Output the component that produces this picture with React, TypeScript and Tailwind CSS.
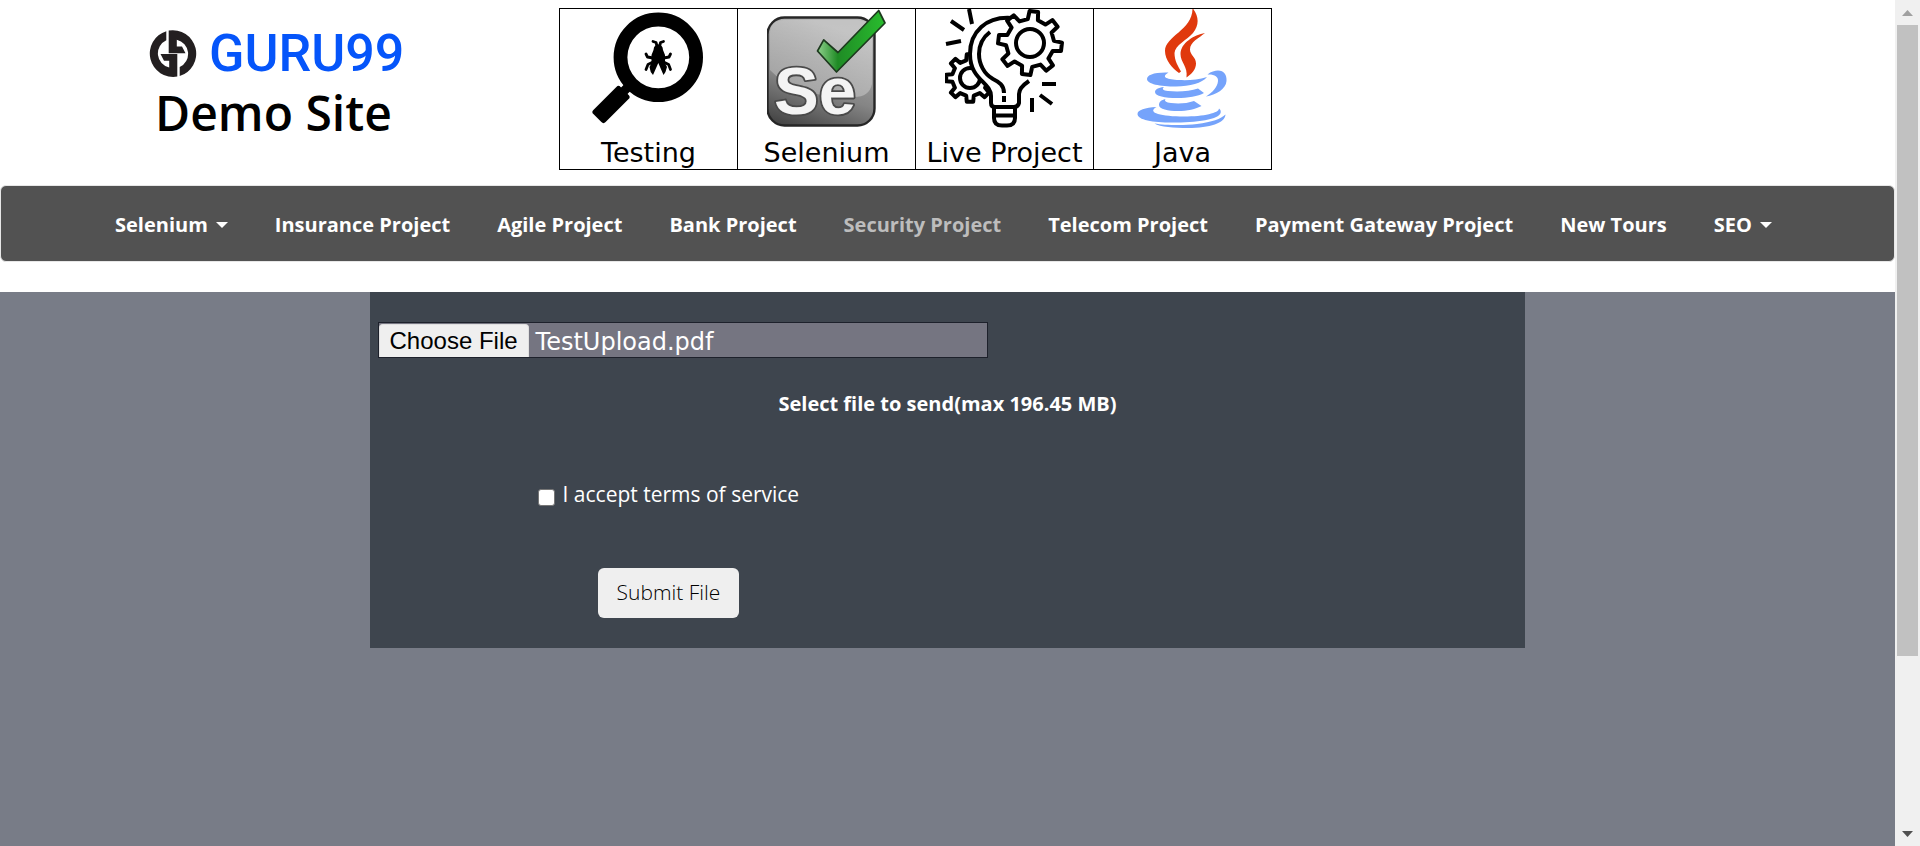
import { useState } from "react";

function gearPath(cx: number, cy: number, outer: number, root: number, teeth: number, turn: number) {
  const step = 360 / teeth;
  const points: string[] = [];
  for (let i = 0; i < teeth; i++) {
    const mid = i * step + turn;
    const corners: [number, number][] = [
      [root, mid - step * 0.27],
      [outer, mid - step * 0.17],
      [outer, mid + step * 0.17],
      [root, mid + step * 0.27],
    ];
    for (const [r, deg] of corners) {
      const a = ((deg - 90) * Math.PI) / 180;
      points.push(`${(cx + r * Math.cos(a)).toFixed(1)} ${(cy + r * Math.sin(a)).toFixed(1)}`);
    }
  }
  return `M${points.join("L")}Z`;
}

const bigGear = gearPath(86, 35, 32, 24, 8, 7);
const smallGear = gearPath(26, 70, 24, 18, 8, 0);

function LogoMark() {
  const half = "M17.3 1.2A23.4 23.4 0 0 0 28.3 46.6V24H11.5L15 30.7H20.2V37.5A14.5 14.5 0 0 1 17.3 10.2Z";
  return (
    <svg viewBox="0 0 48 48" className="size-12" fill="#231f20" aria-hidden="true">
      <path d={half} />
      <path d={half} transform="rotate(180 24 23.6)" />
    </svg>
  );
}

function TestingIcon() {
  return (
    <svg viewBox="1 1 120 120" className="size-[120px]" aria-hidden="true">
      <circle cx="70.3" cy="49.3" r="37.8" fill="none" stroke="#000" strokeWidth="13.8" />
      <path d="M45 74L34 85" stroke="#000" strokeWidth="9" />
      <path d="M30.5 81L38.5 89L15.5 112L7.5 104Z" stroke="#000" strokeWidth="6" strokeLinejoin="round" />
      <path d="M65.5 42Q66 36.5 70.3 36.5Q74.6 36.5 75 42L77 47V55L79 59Q78 64 75.5 67L70.3 55L65 67Q62 64 61.5 59L63.5 55V47Z" />
      <g fill="none" stroke="#000" strokeWidth="2.8" strokeLinecap="round" strokeLinejoin="round">
        <path d="M69 38L68 34.5L65 33.5M71.6 38L72.6 34.5L75.5 33.5" />
        <path d="M65 50L59.5 49L58 46M75.6 50L81 49L82.5 46" />
        <path d="M65 54L60 56.5L58 61.5M75.6 54L80.6 56.5L82.5 61.5" />
      </g>
    </svg>
  );
}

function SeleniumIcon() {
  return (
    <svg viewBox="1 1 120 120" className="size-[120px]" aria-hidden="true">
      <defs>
        <linearGradient id="seBox" x1="0" y1="1" x2="0.35" y2="0">
          <stop offset="0" stopColor="#3c3c3c" />
          <stop offset="0.45" stopColor="#858585" />
          <stop offset="1" stopColor="#b4b4b4" />
        </linearGradient>
        <linearGradient id="seShine" x1="0" y1="0" x2="0" y2="1">
          <stop offset="0" stopColor="#fff" stopOpacity="0.2" />
          <stop offset="1" stopColor="#fff" stopOpacity="0.3" />
        </linearGradient>
        <linearGradient id="seCheck" x1="0" y1="0" x2="1" y2="0">
          <stop offset="0" stopColor="#8fd08c" />
          <stop offset="0.3" stopColor="#1f8b25" />
          <stop offset="1" stopColor="#29bd2e" />
        </linearGradient>
      </defs>
      <rect x="1.5" y="9.5" width="107" height="108" rx="17" fill="url(#seBox)" stroke="#262626" strokeWidth="2.4" />
      <path d="M4 62V26Q4 12 18 12H92Q106 12 106 26V76Q103 90 86 89Q30 90 4 62Z" fill="url(#seShine)" />
      <text x="8" y="106" fontFamily="Liberation Sans, Arial, sans-serif" fontWeight="700" fontSize="67" fill="#f4f4f4" stroke="#4a4a4a" strokeWidth="3.6" strokeLinejoin="round" paintOrder="stroke">
        Se
      </text>
      <path d="M51.5 43L57.7 31.8L72 44.5L112.7 2.5L119 15L70.5 64Z" fill="url(#seCheck)" stroke="#1d3a1e" strokeWidth="1.7" strokeLinejoin="round" />
    </svg>
  );
}

function LiveProjectIcon() {
  return (
    <svg viewBox="1 1 120 120" className="size-[120px]" fill="none" stroke="#000" strokeWidth="4" strokeLinejoin="round" aria-hidden="true">
      <path d={smallGear} />
      <circle cx="26" cy="70" r="10" />
      <path d="M68 8C42 7 26 24 26 46C26 72 47 74 47 88V95Q47 99 51 99H70Q74 99 75 95V86C75 81 79 77 85 73L92 50Z" fill="#fff" stroke="none" />
      <path d="M68 10C42 8 26 24 26 46C26 72 47 74 47 88V95Q47 99 51 99H70Q74 99 75 95V86C75 81 79 77 85 73" />
      <path d="M46 24C38 30 35 37 35 46C35 56 40 66 49 71C55 74 60 77 60 85M60 88V94" />
      <path d="M50 99V110Q50 117.5 58 117.5H63Q71 117.5 71 110V99M50 107.5H71" />
      <path d={bigGear} fill="#fff" />
      <circle cx="86" cy="35" r="14" />
      <path d="M2 36L17 33M7 13L20 22M25 1L28 16M98 76H112M96 87L108 96M88 90V104" />
    </svg>
  );
}

function JavaIcon() {
  return (
    <svg viewBox="1 1 120 120" className="size-[120px]" aria-hidden="true">
      <g fill="#e0390d">
        <path d="M70.5 0C77 8 77.5 17 71 25C65 32 53 37 52.5 45C52.5 53 56 58 59 63.5L57 65C50 60 43 52 43 43C43 28 71 22 70.5 0Z" />
        <path d="M83 25C72 27 58.5 35 58.5 46C58.5 55 66 58 64.5 69.5C70 66 74 61 74 55.5C74 49 68 47 68 41.5C68 34 77 30 83 25Z" />
      </g>
      <g fill="#75a3fb">
        <path d="M46.5 64.5C32 64 25 67 25 71C25 76 38 78.5 54 78.5C68 78.5 80 75 85 69C76 72 65 72.5 57 72C46 71.5 38 69.5 46.5 64.5Z" />
        <path d="M42 79C36 79.5 33 81.5 33 84C33 88 43 90 55 90C66 90 76 88.5 82 85L76 80.5C68 83.500 55 84 46 83C41 82.500 39.500 81 42 79Z" />
        <path d="M43.5 91C39 92 37 94 37 97C37 101 46 103 56 103C65 103 74 101 79.5 98L72 93C65 95.5 56 96 49 95C44 94.5 42 93 43.5 91Z" />
        <path d="M85.5 66.5C89 63.5 93 62.5 96 62.5C102 62.5 105 67 104.5 73C104 81 94 87 84 88.5C91 84 95.5 79 96 73C96.5 68.5 92 66 85.5 66.5Z" />
        <path d="M34.5 99C23 99.5 15.5 102 15.5 106C15.5 112 31 114.5 50 114.5C74 114.5 98 112 98.8 104Q99 101.5 97 100.5C97 105 82 108.5 62 108.5C40 108.5 24 105 34.5 99Z" />
        <path d="M32.5 115.5C42 117 60 118 75 116C90 114 99 111 103.5 106.5C103 115 88 120 66 120C52 120 38 119 32.5 115.5Z" />
      </g>
    </svg>
  );
}

const courses = [
  { label: "Testing", Icon: TestingIcon },
  { label: "Selenium", Icon: SeleniumIcon },
  { label: "Live Project", Icon: LiveProjectIcon },
  { label: "Java", Icon: JavaIcon },
];

const navItems = [
  { label: "Selenium", menu: true },
  { label: "Insurance Project" },
  { label: "Agile Project" },
  { label: "Bank Project" },
  { label: "Security Project", muted: true },
  { label: "Telecom Project" },
  { label: "Payment Gateway Project" },
  { label: "New Tours" },
  { label: "SEO", menu: true },
];

function Caret() {
  return (
    <svg viewBox="0 0 12 6" className="h-[6px] w-3" fill="currentColor" aria-hidden="true">
      <path d="M0 0H12L6 6Z" />
    </svg>
  );
}

function ScrollBar() {
  return (
    <div className="flex w-[25px] shrink-0 flex-col bg-[#f0f0f0]" aria-hidden="true">
      <div className="flex h-[25px] items-center justify-center">
        <svg viewBox="0 0 11 6" className="h-[6px] w-[11px]" fill="#a0a0a0">
          <path d="M0 6H11L5.5 0Z" />
        </svg>
      </div>
      <div className="flex flex-1 flex-col px-[2px]">
        <div className="grow-[631] bg-[#c1c1c1]" />
        <div className="grow-[165]" />
      </div>
      <div className="flex h-[25px] items-center justify-center">
        <svg viewBox="0 0 11 6" className="h-[6px] w-[11px]" fill="#505050">
          <path d="M0 0H11L5.5 6Z" />
        </svg>
      </div>
    </div>
  );
}

export default function App() {
  const [fileName, setFileName] = useState("TestUpload.pdf");

  return (
    <div className="flex min-h-screen bg-white font-['Open_Sans',sans-serif] text-xl text-black">
      <div className="flex min-w-0 flex-1 flex-col">
        <header className="flex h-[185px] items-start">
          <div className="w-[559px] shrink-0 pt-[30px] pl-[149px]">
            <a href="#home" className="flex h-12 items-center gap-3">
              <LogoMark />
              <span className="font-[Roboto,sans-serif] text-[52px] leading-[48px] font-medium text-[#0555fa]">GURU99</span>
            </a>
            <h1 className="mt-[11px] pl-[6px] text-5xl leading-[48px] font-semibold">Demo Site</h1>
          </div>
          <ul className="mt-2 flex border-y border-l border-black">
            {courses.map(({ label, Icon }) => (
              <li key={label} className="w-[178px] border-r border-black">
                <a href="#course" className="flex flex-col items-center gap-2 font-['DejaVu_Sans',Verdana,sans-serif] text-[27px] leading-8">
                  <Icon />
                  <span className="whitespace-nowrap">{label}</span>
                </a>
              </li>
            ))}
          </ul>
        </header>

        <nav className="h-[77px] rounded-md border border-[#e7e7e7] bg-[#525252] pt-[2px] pl-[114px]">
          <ul className="flex h-full items-center gap-[47px] font-bold whitespace-nowrap">
            {navItems.map(({ label, menu, muted }) => (
              <li key={label}>
                <a href="#menu" className={muted ? "text-[#bdbdbd]" : "flex items-center gap-2 text-white"}>
                  {label}
                  {menu && <Caret />}
                </a>
              </li>
            ))}
          </ul>
        </nav>

        <main className="mt-[30px] flex-1 bg-[#787c87]">
          <form className="mx-auto w-[61%] bg-[#3e454e] px-2 py-[30px] text-white" onSubmit={(e) => e.preventDefault()}>
            <input
              id="upload"
              type="file"
              className="sr-only"
              onChange={(e) => setFileName(e.target.files?.[0]?.name ?? "No file chosen")}
            />
            <label htmlFor="upload" className="flex h-9 w-[610px] border border-[#1d212b] bg-[#757581] pt-px text-2xl leading-8">
              <span className="rounded-t-sm border border-b-0 border-[#e0e0e0] bg-[#efefef] px-[10px] font-['Liberation_Sans',Arial,sans-serif] text-black">
                Choose File
              </span>
              <span className="pl-[7px] font-['DejaVu_Sans',Verdana,sans-serif] leading-9">{fileName}</span>
            </label>
            <p className="mt-8 text-center leading-7 font-bold">Select file to send(max 196.45 MB)</p>
            <div className="mt-[62px] flex items-start gap-2 pl-40">
              <input id="terms" type="checkbox" className="mt-[9px] size-[17px] appearance-none rounded-[3px] border border-[#767676] bg-white checked:bg-[#0075ff]" />
              <label htmlFor="terms" className="text-[21px] leading-7">I accept terms of service</label>
            </div>
            <button type="submit" className="mt-[60px] ml-[220px] h-[50px] rounded-md bg-[#efefef] px-[19px] text-[21px] font-light text-black">
              Submit File
            </button>
          </form>
        </main>
      </div>
      <ScrollBar />
    </div>
  );
}
